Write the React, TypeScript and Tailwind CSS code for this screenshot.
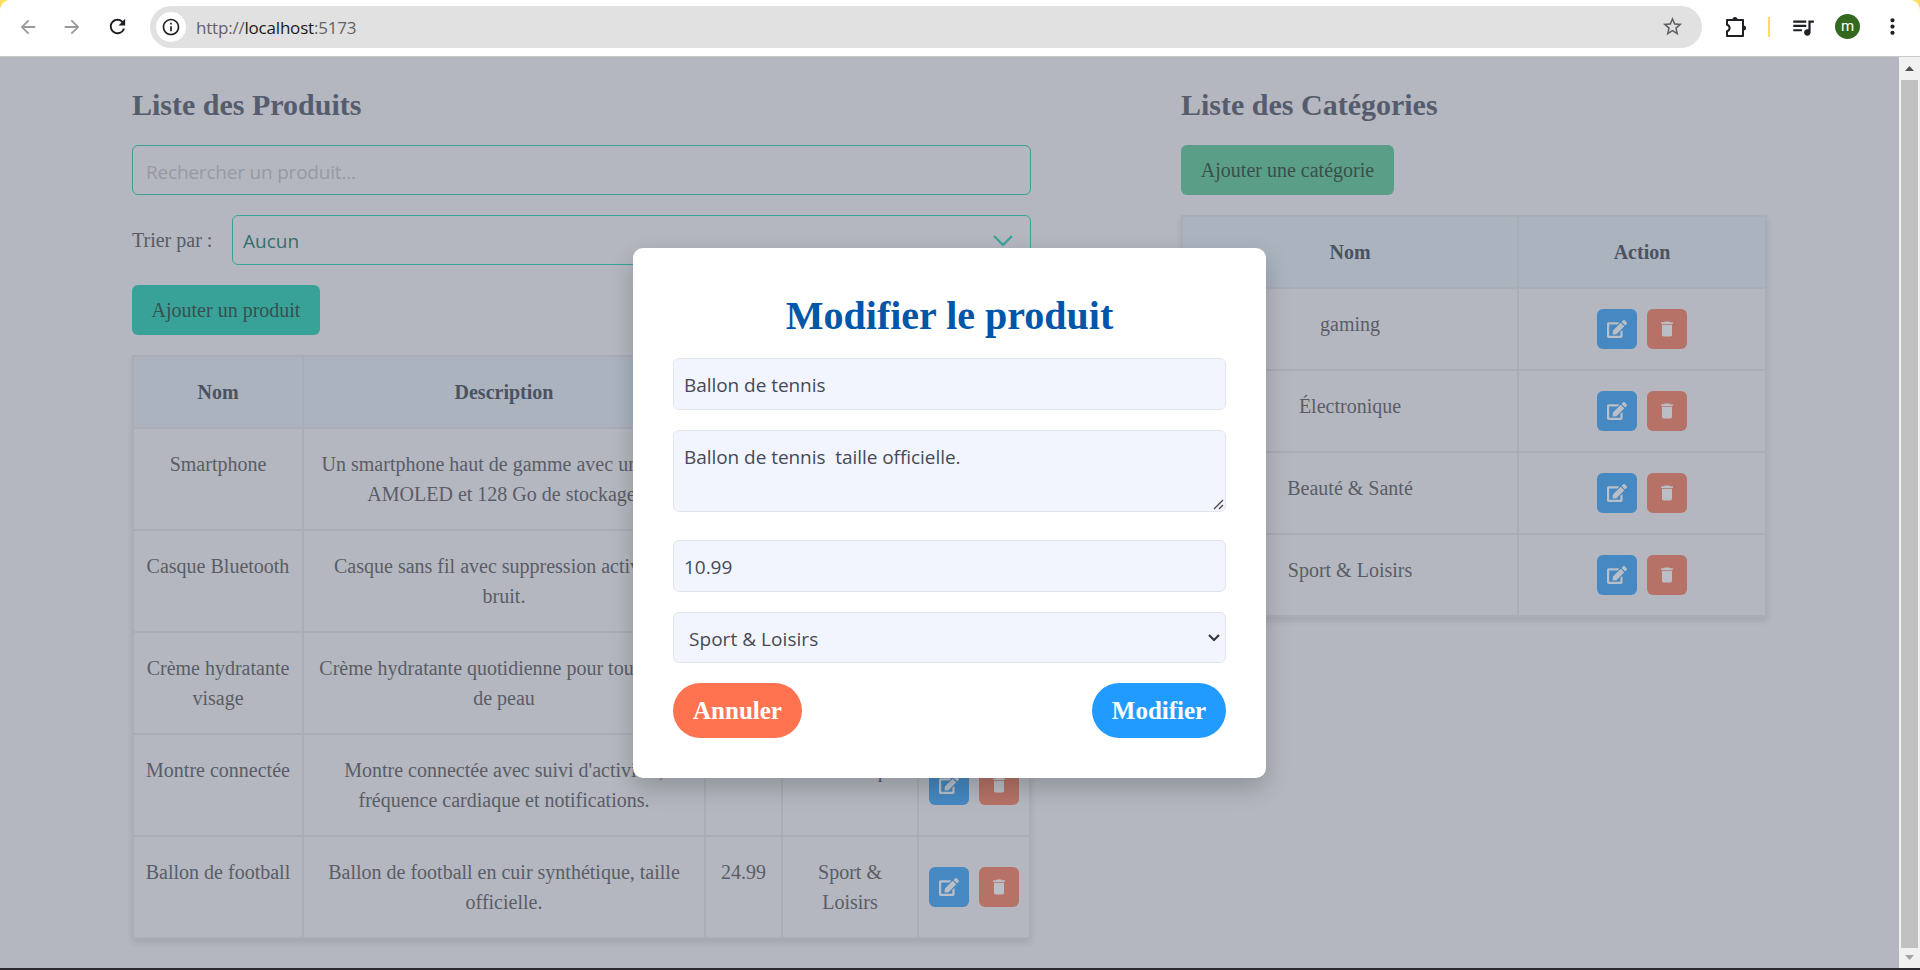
import React from "react";
import { MdArrowBack, MdArrowForward, MdRefresh, MdInfoOutline, MdStarOutline, MdQueueMusic, MdMoreVert, MdDelete } from "react-icons/md";

const products = [
  ["Smartphone", "Un smartphone haut de gamme avec un écran AMOLED et 128 Go de stockage.", "699.99", "Électronique"],
  ["Casque Bluetooth", "Casque sans fil avec suppression active du bruit.", "129.99", "Électronique"],
  ["Crème hydratante visage", "Crème hydratante quotidienne pour tous types de peau", "19.99", "Beauté & Santé"],
  ["Montre connectée", "Montre connectée avec suivi d'activités, fréquence cardiaque et notifications.", "199.99", "Électronique"],
  ["Ballon de football", "Ballon de football en cuir synthétique, taille officielle.", "24.99", "Sport & Loisirs"],
];
const categories = ["gaming", "Électronique", "Beauté & Santé", "Sport & Loisirs"];

const serif = "font-['Liberation_Serif',serif]";
const field = "block w-full rounded-md border border-[#e2e5ea] bg-[#f2f5fd] font-['Open_Sans',sans-serif] text-[19px] tracking-[-0.05px] text-[#444a57] leading-[30px]";
const th = "border-2 border-[#a8adb6] bg-[#abb3bf] px-3 py-5 font-bold text-[#4c5260]";
const td = "border-2 border-[#a8adb6] px-3 py-5 text-center align-top text-[#5a5d66]";
const nameTd = "border-2 border-[#a8adb6] px-2 py-5 text-center align-top text-[#5a5d66]";

function EditIcon() {
  return (
    <svg viewBox="0 0 576 512" className="h-[18px] w-[20px]" fill="currentColor">
      <path d="M402.6 83.2l90.2 90.2c3.8 3.8 3.8 10 0 13.8L274.4 405.6l-92.8 10.3c-12.4 1.4-22.9-9.1-21.5-21.5l10.3-92.8L388.8 83.2c3.8-3.8 10-3.8 13.8 0zm162-22.9l-48.8-48.8c-15.2-15.2-39.9-15.2-55.2 0l-35.4 35.4c-3.8 3.8-3.8 10 0 13.8l90.2 90.2c3.8 3.8 10 3.8 13.8 0l35.4-35.4c15.2-15.3 15.2-40 0-55.2zM384 346.2V448H64V128h229.8c3.2 0 6.2-1.3 8.5-3.5l40-40c7.6-7.6 2.2-20.5-8.5-20.5H48C21.5 64 0 85.5 0 112v352c0 26.5 21.5 48 48 48h352c26.5 0 48-21.5 48-48V306.2c0-10.7-12.9-16-20.5-8.5l-40 40c-2.2 2.3-3.5 5.3-3.5 8.5z" />
    </svg>
  );
}

function PuzzleIcon() {
  return (
    <svg viewBox="0 0 24 24" className="ml-[22px] mr-px size-6" fill="none" stroke="currentColor" strokeWidth="2" strokeLinejoin="round">
      <path d="M3 5h16v16H3v-4.700a3.400 3.400 0 0 0 0-6.600z" />
      <path d="M8.500 4.500a2.500 2.500 0 0 1 5 0zM19.500 10.500a2.500 2.500 0 0 1 0 5z" fill="currentColor" stroke="none" />
    </svg>
  );
}

function Actions() {
  return (
    <div className="flex justify-center gap-[10px] text-[#babfc7]">
      <button className="flex size-10 items-center justify-center rounded-md bg-[#4688c1]"><EditIcon /></button>
      <button className="flex size-10 items-center justify-center rounded-md bg-[#b67267]"><MdDelete size={20} /></button>
    </div>
  );
}

function Toolbar() {
  return (
    <div className="bg-[#ffdc5c]">
      <header className="flex h-[57px] items-center rounded-t-[10px] border-b border-[#c9cbc9] bg-white pb-[3px] text-[#1f2023]">
        <MdArrowBack size={22} className="ml-[17px] text-[#9a9a9a]" />
        <MdArrowForward size={22} className="ml-[22px] text-[#9a9a9a]" />
        <MdRefresh size={23} className="ml-[23px]" />
        <div className="ml-[21px] flex h-[42px] w-[1552px] items-center rounded-full bg-[#e1e1e1] pl-[6px] pr-[18px]">
          <span className="flex size-[30px] items-center justify-center rounded-full bg-white"><MdInfoOutline size={20} /></span>
          <span className="ml-[10px] flex-1 pt-[2px] font-['Open_Sans',sans-serif] text-[17px] tracking-[-0.2px] text-[#636363]">
            http://<span className="text-[#1a1a1a]">localhost</span>:5173
          </span>
          <MdStarOutline size={23} className="text-[#5f6063]" />
        </div>
        <PuzzleIcon />
        <span className="ml-[19px] h-5 w-[2px] bg-[#ffdc5c]" />
        <MdQueueMusic size={26} className="ml-[20px]" />
        <span className="ml-[19px] flex size-[25px] items-center justify-center rounded-full bg-[#33691e] font-['Roboto',sans-serif] text-[15px] leading-none text-white">m</span>
        <MdMoreVert size={25} className="ml-[20px]" />
      </header>
    </div>
  );
}

function Modal() {
  return (
    <div className="absolute left-[633px] top-[191px] h-[530px] w-[633px] rounded-[10px] bg-white px-10 pt-10 shadow-[0_10px_25px_rgba(0,0,0,0.2)]">
      <h2 className="mt-2 text-center text-[40px] font-bold leading-[40px] text-[#0056a8]">Modifier le produit</h2>
      <input className={`${field} mt-[22px] h-[52px] px-[10px] pt-[2px]`} defaultValue="Ballon de tennis" />
      <div className="relative mt-5">
        <textarea className={`${field} h-[82px] resize-none px-[10px] pt-[11px]`} defaultValue="Ballon de tennis  taille officielle." />
        <svg className="absolute bottom-[2px] right-[2px] size-[11px]" viewBox="0 0 11 11" stroke="#444" strokeWidth="1.3" fill="none">
          <path d="M1 10L10 1M6 10L10 6" />
        </svg>
      </div>
      <input className={`${field} mt-7 h-[52px] px-[10px] pt-[2px]`} defaultValue="10.99" />
      <div className={`${field} mt-5 flex h-[51px] items-center justify-between pl-[15px] pr-[5px]`}>
        <span className="pt-[2px] tracking-[0.05px]">Sport &amp; Loisirs</span>
        <svg className="size-3" viewBox="0 0 12 12" fill="none" stroke="#333a46" strokeWidth="2.2"><path d="M1 3l5 5 5-5" /></svg>
      </div>
      <div className="mt-5 flex justify-between text-[25px] font-bold leading-[35px] text-white">
        <button className="h-[55px] w-[129px] rounded-full bg-[#ff7350]">Annuler</button>
        <button className="h-[55px] w-[134px] rounded-full bg-[#219bff]">Modifier</button>
      </div>
    </div>
  );
}

export default function App() {
  return (
    <div className={`flex h-[970px] w-[1920px] flex-col overflow-hidden bg-white text-[20px] leading-[30px] ${serif}`}>
      <Toolbar />
      <div className="flex h-[911px]">
        <main className="relative flex h-full w-[1899px] items-start overflow-hidden bg-[#b4b7bf] pl-[132px] pt-7">
          <section className="w-[899px]">
            <h1 className="mb-5 text-[30px] font-bold leading-[40px] text-[#565c6c]">Liste des Produits</h1>
            <input className="block h-[50px] w-full rounded-md border border-[#38a299] px-[13px] pt-[3px] font-['Open_Sans',sans-serif] text-[19px] tracking-[-0.2px] placeholder:text-[#979aa3]" placeholder="Rechercher un produit..." />
            <div className="mt-5 flex items-center justify-between text-[#565b66]">
              <span>Trier par :</span>
              <div className="flex h-[50px] w-[799px] items-center justify-between rounded-md border border-[#38a299] pl-[10px] pr-[17px] font-['Open_Sans',sans-serif] text-[19px] text-[#34706f]">
                <span className="pt-[2px]">Aucun</span>
                <svg className="mt-px h-[12px] w-[20px]" viewBox="0 0 20 12" fill="none" stroke="#38a299" strokeWidth="2.2"><path d="M1 1l9 9 9-9" /></svg>
              </div>
            </div>
            <button className="mt-5 block h-[50px] w-[188px] rounded-md bg-[#38a299] text-[#37504f]">Ajouter un produit</button>
            <table className="mt-5 w-[899px] table-fixed border-collapse shadow-[0_4px_6px_rgba(0,0,0,0.09)]">
              <colgroup>
                <col className="w-[170px]" /><col className="w-[402px]" /><col className="w-[77px]" /><col className="w-[136px]" /><col className="w-[112px]" />
              </colgroup>
              <thead><tr>{["Nom", "Description", "Prix", "Catégorie", "Action"].map((h) => <th key={h} className={th}>{h}</th>)}</tr></thead>
              <tbody>
                {products.map(([name, desc, price, cat]) => (
                  <tr key={name}>
                    <td className={nameTd}>{name}</td>
                    <td className={td}>{desc}</td>
                    <td className={td}>{price}</td>
                    <td className={td}>{cat}</td>
                    <td className="border-2 border-[#a8adb6] align-middle"><Actions /></td>
                  </tr>
                ))}
              </tbody>
            </table>
          </section>
          <section className="ml-[150px] w-[586px]">
            <h1 className="mb-5 text-[30px] font-bold leading-[40px] text-[#565c6c]">Liste des Catégories</h1>
            <button className="block h-[50px] w-[213px] rounded-md bg-[#5b9e88] text-[#3a4f4a]">Ajouter une catégorie</button>
            <table className="mt-5 w-[586px] table-fixed border-collapse shadow-[0_4px_6px_rgba(0,0,0,0.09)]">
              <colgroup><col className="w-[336px]" /><col className="w-[248px]" /></colgroup>
              <thead><tr><th className={th}>Nom</th><th className={th}>Action</th></tr></thead>
              <tbody>
                {categories.map((c) => (
                  <tr key={c} className="h-[82px]">
                    <td className={td}>{c}</td>
                    <td className="border-2 border-[#a8adb6] align-middle"><Actions /></td>
                  </tr>
                ))}
              </tbody>
            </table>
          </section>
          <Modal />
        </main>
        <aside className="flex w-[21px] flex-col items-center bg-[#f1f1f1]">
          <svg className="h-[23px] w-[9px]" viewBox="0 0 9 23"><path d="M0 14l4.500-5 4.500 5z" fill="#505050" /></svg>
          <div className="mr-px w-[17px] flex-1 bg-[#c1c1c1]" />
          <svg className="h-[20px] w-[9px]" viewBox="0 0 9 20"><path d="M0 7l4.500 5 4.500-5z" fill="#a3a3a3" /></svg>
        </aside>
      </div>
      <div className="h-[2px] bg-[#2b2a2e]" />
    </div>
  );
}
